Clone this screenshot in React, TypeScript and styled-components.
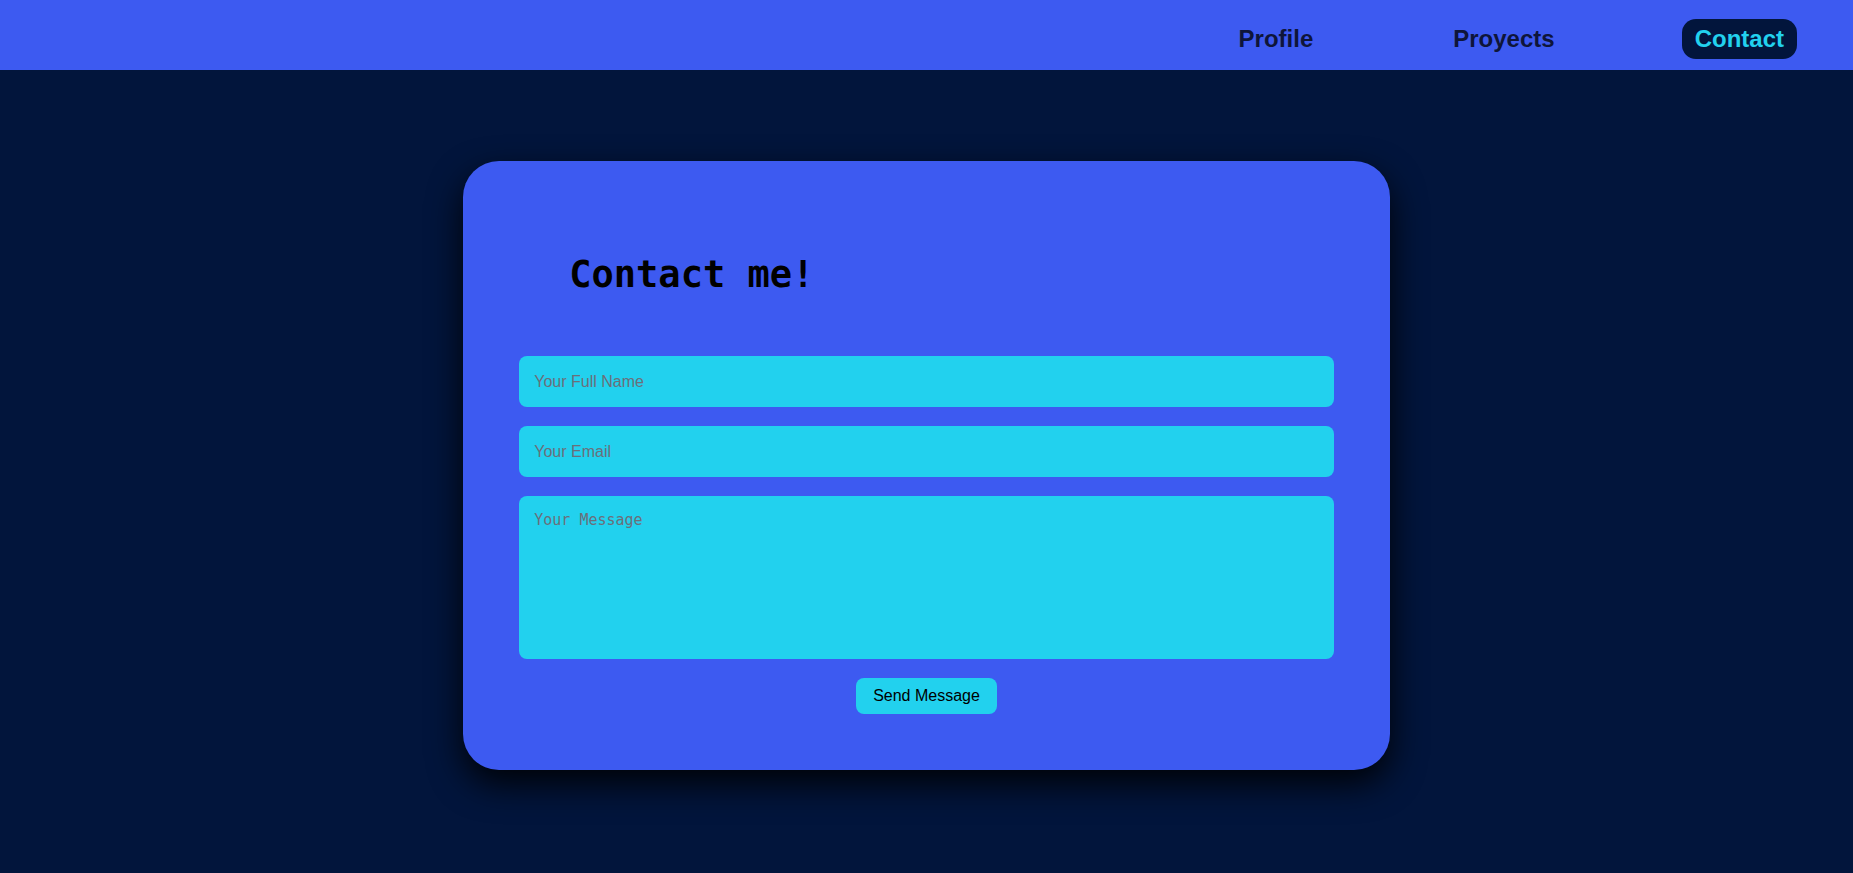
import React from 'react';
import styled, { createGlobalStyle } from 'styled-components';

const GlobalStyle = createGlobalStyle`
    * {
        box-sizing: border-box;
    }
    html, body {
        margin: 0;
        padding: 0;
        background-color: #02153c;
        font-family: "Liberation Sans", Arial, sans-serif;
    }
`

type NavItem = {
    label: string;
    active?: boolean;
}

const navItems: NavItem[] = [
    { label: 'Profile' },
    { label: 'Proyects' },
    { label: 'Contact', active: true },
];

export default function App() {
    return (
        <>
            <GlobalStyle />
            <Header>
                <NavList>
                    {
                        navItems.map((item) => (
                            <NavLink key={item.label} $active={item.active}>
                                {item.label}
                            </NavLink>
                        ))
                    }
                </NavList>
            </Header>
            <Main>
                <Card>
                    <Title>Contact me!</Title>
                    <Form onSubmit={(e) => e.preventDefault()}>
                        <Input type="text" placeholder="Your Full Name" />
                        <Input type="email" placeholder="Your Email" />
                        <TextArea placeholder="Your Message" />
                        <SendButton type="submit">Send Message</SendButton>
                    </Form>
                </Card>
            </Main>
        </>
    );
}

const Header = styled.header`
    width: 100%;
    height: 70px;
    background-color: #3d5af1;
    display: flex;
    align-items: center;
    justify-content: flex-end;
    padding: 8px 56px 0 0;
`

const NavList = styled.nav`
    display: flex;
    align-items: center;
    gap: 114px;
`

const NavLink = styled.a<{$active?: boolean}>`
    font-size: 24px;
    font-weight: bold;
    line-height: 40px;
    height: 40px;
    padding: 0 13px;
    border-radius: 14px;
    cursor: pointer;
    color: ${({$active}) => $active ? '#22d1ee' : '#0e153a'};
    background-color: ${({$active}) => $active ? '#02153c' : 'transparent'};
`

const Main = styled.main`
    width: 100%;
    padding: 91px 0 103px;
    display: flex;
    justify-content: center;
`

const Card = styled.section`
    width: 50%;
    background-color: #3d5af1;
    border-radius: 36px;
    padding: 56px;
    box-shadow: 0 14px 34px rgba(0, 0, 0, 0.9);
    display: flex;
    flex-direction: column;
`

const Title = styled.h1`
    margin: 36px 0 60px 50px;
    font-family: "DejaVu Sans Mono", "Liberation Mono", monospace;
    font-size: 37px;
    font-weight: bold;
    color: #000;
`

const Form = styled.form`
    display: flex;
    flex-direction: column;
    gap: 19px;
`

const Input = styled.input`
    width: 100%;
    height: 51px;
    border: none;
    outline: none;
    border-radius: 8px;
    background-color: #22d1ee;
    padding: 0 15px;
    font-family: "Liberation Sans", Arial, sans-serif;
    font-size: 16px;
    color: #000;

    &::placeholder {
        color: #6b6f7a;
    }
`

const TextArea = styled.textarea`
    width: 100%;
    height: 163px;
    border: none;
    outline: none;
    resize: none;
    border-radius: 8px;
    background-color: #22d1ee;
    padding: 15px 15px;
    font-family: "DejaVu Sans Mono", monospace;
    font-size: 15px;
    color: #000;

    &::placeholder {
        color: #6b6f7a;
    }
`

const SendButton = styled.button`
    align-self: center;
    height: 36px;
    padding: 0 17px;
    border: none;
    border-radius: 8px;
    background-color: #22d1ee;
    font-family: "Liberation Sans", Arial, sans-serif;
    font-size: 16px;
    color: #000;
    cursor: pointer;
`
